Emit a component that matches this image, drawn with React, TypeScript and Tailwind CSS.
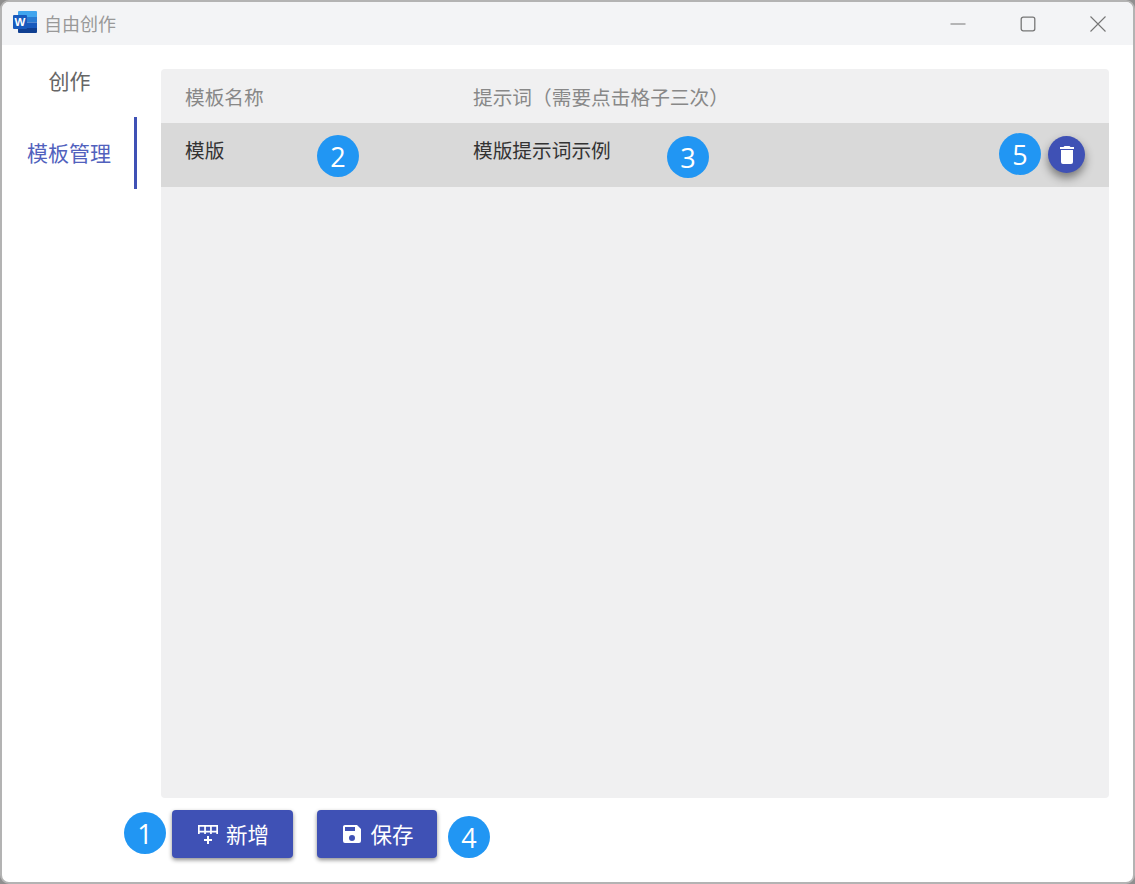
import React from "react";

const font = { fontFamily: '"Noto Sans CJK SC", "Noto Sans", sans-serif' };

function Badge({ n, className }: { n: string; className: string }) {
  return (
    <div
      className={`absolute flex h-[42px] w-[42px] items-center justify-center rounded-full bg-[#2196f3] text-[27px] font-normal leading-none text-white ${className}`}
      style={{ fontFamily: '"Open Sans", sans-serif' }}
    >
      {n}
    </div>
  );
}

function Mdi({ d, className }: { d: string; className: string }) {
  return (
    <svg viewBox="0 0 24 24" fill="currentColor" className={className}>
      <path d={d} />
    </svg>
  );
}

function WordLogo() {
  return (
    <svg viewBox="0 0 24 24" className="mb-[3px] h-6 w-6">
      <path d="M6 1h17a1 1 0 0 1 1 1v5H5V2a1 1 0 0 1 1-1z" fill="#41a5ee" />
      <path d="M5 7h19v5.500H5z" fill="#2b7cd3" />
      <path d="M5 12.500h19V18H5z" fill="#185abd" />
      <path d="M5 18h19v4a1 1 0 0 1-1 1H6a1 1 0 0 1-1-1z" fill="#103f91" />
      <rect x="0" y="5" width="14" height="14" rx="1" fill="#185abd" />
      <text x="7" y="16" textAnchor="middle" fontSize="11.500" fontWeight="700" fill="#fff" fontFamily="Liberation Sans, sans-serif">W</text>
    </svg>
  );
}

function ActionButton({ icon, label, className }: { icon: React.ReactNode; label: string; className: string }) {
  return (
    <button className={`flex h-12 items-center justify-center gap-[6px] rounded-[4px] bg-[#3f51b5] text-[21.5px] font-normal text-white shadow-[0_2px_4px_rgba(0,0,0,0.45)] ${className}`}>
      {icon}
      <span>{label}</span>
    </button>
  );
}

export default function App() {
  return (
    <div className="relative h-[884px] w-[1135px] bg-[#8f8f8f]" style={font}>
      <div className="flex h-full w-full flex-col overflow-hidden rounded-[9px] border-2 border-[#b3b3b3] bg-white">
        {/* Title bar */}
        <div className="flex h-[43px] shrink-0 items-center bg-[#f3f4f6] pl-[11px]">
          <WordLogo />
          <span className="ml-[7px] text-[18px] font-normal text-[#999]">自由创作</span>
          <div className="ml-auto flex items-center gap-[54px] pr-[27px] text-[#767676]">
            <svg viewBox="0 0 16 16" className="h-4 w-4" fill="none" stroke="currentColor" strokeWidth="1">
              <path d="M0.5 8h15" />
            </svg>
            <svg viewBox="0 0 16 16" className="h-4 w-4" fill="none" stroke="currentColor" strokeWidth="1.3">
              <rect x="1.2" y="1.2" width="13.6" height="13.6" rx="2" />
            </svg>
            <svg viewBox="0 0 16 16" className="h-4 w-4" fill="none" stroke="currentColor" strokeWidth="1.1">
              <path d="M0.5 0.5l15 15M15.5 0.5l-15 15" />
            </svg>
          </div>
        </div>

        {/* Body */}
        <div className="flex min-h-0 flex-1">
          <div className="flex w-[135px] shrink-0 flex-col text-[21px] font-normal">
            <div className="flex h-[72px] items-center justify-center text-[#666]">创作</div>
            <div className="flex h-[72px] items-center justify-center border-r-[3px] border-[#3f51b5] pl-[2px] text-[#5161bd]">模板管理</div>
          </div>
          <div className="flex min-w-0 flex-1 flex-col pl-[24px] pr-[24px] pt-[24px]">
            <div className="h-[729px] overflow-hidden rounded-[4px] bg-[#f0f0f1] text-[19.7px] font-normal">
              <div className="flex h-[54px] items-center pt-[1px] text-[#888]">
                <div className="w-[312px] pl-[24px]">模板名称</div>
                <div>提示词（需要点击格子三次）</div>
              </div>
              <div className="flex h-[64px] items-center bg-[#d9d9d9] pb-[10px] text-[#333]">
                <div className="w-[312px] pl-[24px]">模版</div>
                <div>模版提示词示例</div>
              </div>
            </div>
          </div>
        </div>

        {/* Footer */}
        <div className="flex h-[84px] shrink-0 items-start gap-[24px] pl-[170px] pt-[12px]">
          <ActionButton
            className="w-[121px]"
            label="新增"
            icon={<Mdi className="h-6 w-6" d="M2 3h20v9h-1.700v-1.500h-4.500V12h-1.700v-1.500h-4.200V12H8.200v-1.500H3.700V12H2V3zM3.700 4.700v4.100h4.500V4.700H3.700zm6.200 0v4.100h4.200V4.700H9.900zm5.900 0v4.100h4.500V4.700h-4.500zM11 14h2v3h3v2h-3v3h-2v-3H8v-2h3v-3z" />}
          />
          <ActionButton
            className="w-[120px]"
            label="保存"
            icon={<Mdi className="h-6 w-6" d="M15,9H5V5H15M12,19A3,3 0 0,1 9,16A3,3 0 0,1 12,13A3,3 0 0,1 15,16A3,3 0 0,1 12,19M17,3H5C3.89,3 3,3.9 3,5V19A2,2 0 0,0 5,21H19A2,2 0 0,0 21,19V7L17,3Z" />}
          />
        </div>
      </div>

      {/* Delete button in the row */}
      <button className="absolute left-[1048px] top-[136px] flex h-[37px] w-[37px] items-center justify-center rounded-full bg-[#3f51b5] text-white shadow-[0_5px_10px_rgba(0,0,0,0.45)]">
        <Mdi className="h-6 w-6" d="M19,4H15.5L14.5,3H9.5L8.5,4H5V6H19M6,19A2,2 0 0,0 8,21H16A2,2 0 0,0 18,19V7H6V19Z" />
      </button>

      {/* Annotation badges */}
      <Badge n="1" className="left-[124px] top-[812px]" />
      <Badge n="2" className="left-[317px] top-[135px]" />
      <Badge n="3" className="left-[667px] top-[136px]" />
      <Badge n="4" className="left-[448px] top-[816px]" />
      <Badge n="5" className="left-[999px] top-[133px]" />
    </div>
  );
}
